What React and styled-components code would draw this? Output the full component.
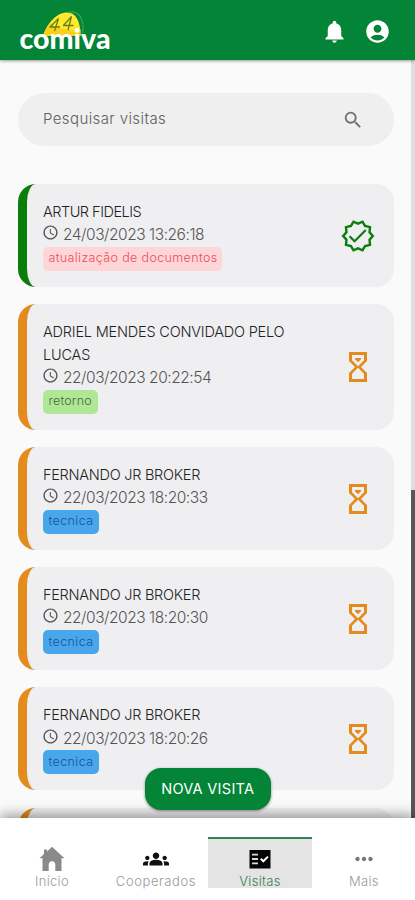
import React from "react"
import styled, { createGlobalStyle } from "styled-components"
import {
  MdNotifications,
  MdAccountCircle,
  MdSearch,
  MdAccessTime,
  MdGroups,
  MdMoreHoriz,
} from "react-icons/md"

const GlobalStyle = createGlobalStyle`
  * {
    box-sizing: border-box;
  }
  body {
    margin: 0;
    background: #fafafa;
    font-family: Inter, "Open Sans", sans-serif;
  }
`

const Page = styled.div`
  display: flex;
  flex-direction: column;
  position: relative;
  width: 415px;
  height: 900px;
  overflow: hidden;
`

const Header = styled.header`
  flex: none;
  display: flex;
  justify-content: space-between;
  align-items: flex-start;
  height: 60px;
  padding: 4px 24.5px 0 18px;
  background: #038437;
  box-shadow: 0 1px 3px rgba(0, 0, 0, 0.4);
  z-index: 1;
`

const HeaderActions = styled.div`
  display: flex;
  gap: 15.5px;
  padding-top: 14px;
  color: #fff;
  font-size: 27px;
`

const Body = styled.div`
  flex: 1;
  min-height: 0;
  display: flex;
`

const Content = styled.main`
  flex: 1;
  min-width: 0;
  overflow: hidden;
  padding: 32.5px 17px 0 18px;
`

const ScrollTrack = styled.div`
  flex: none;
  width: 4px;
  padding-top: 430px;
  background: #dedede;
`

const ScrollThumb = styled.div`
  height: 100%;
  background: #575757;
`

const SearchBox = styled.div`
  display: flex;
  justify-content: space-between;
  align-items: center;
  height: 53.5px;
  margin-bottom: 37.8px;
  padding: 0 30px 0 25px;
  border-radius: 27px;
  background: #efefef;
  color: #606060;

  svg {
    font-size: 22px;
    margin-top: 1px;
    color: #707070;
  }
`

const Text = styled.span`
  letter-spacing: ${p => p.$spacing || 0}px;
`

const SearchText = styled(Text)`
  margin-top: -2px;
  font-size: 15px;
  font-weight: 300;
`

const List = styled.div`
  display: flex;
  flex-direction: column;
  gap: 17.3px;
`

const Card = styled.article`
  flex: none;
  display: flex;
  justify-content: space-between;
  align-items: center;
  padding: 17px 18px 16px 16px;
  border-left: 9px solid ${p => p.$color};
  border-radius: 18px;
  background: #efeff1;
`

const CardInfo = styled.div`
  width: 252px;
`

const Name = styled.div`
  font-size: 14.5px;
  font-weight: 300;
  line-height: 22.5px;
  color: #222;
`

const DateRow = styled.div`
  display: flex;
  align-items: center;
  gap: 4px;
  height: 22.5px;
  font-size: 15.5px;
  font-weight: 300;
  white-space: nowrap;
  color: #555;

  svg {
    flex: none;
    font-size: 17px;
    margin: -4px 0 0 -1px;
  }
`

const Tag = styled.div`
  display: flex;
  align-items: center;
  width: ${p => p.$width}px;
  height: 24px;
  margin-top: 1px;
  padding: 0 0 2px 5.5px;
  border-radius: 5px;
  font-size: 12.5px;
  font-weight: 300;
  white-space: nowrap;
  background: ${p => p.$bg};
  color: ${p => p.$color};
`

const StatusIcon = styled.div`
  display: flex;
  font-size: 36px;
  color: ${p => p.$color};
`

const NewVisit = styled.button`
  position: absolute;
  left: 144.5px;
  top: 767.5px;
  width: 126.5px;
  height: 42px;
  padding: 0;
  border: 0;
  border-radius: 16px;
  background: #038437;
  box-shadow: 0 1px 3px rgba(0, 0, 0, 0.45);
  color: #fff;
  font-family: inherit;
  font-size: 14.5px;
  font-weight: 400;
  z-index: 2;
`

const Nav = styled.nav`
  flex: none;
  display: grid;
  grid-template-columns: repeat(4, 104px);
  height: 82px;
  padding-top: 19px;
  background: #fff;
  box-shadow: 0 -3px 12px rgba(0, 0, 0, 0.4);
  z-index: 1;
`

const NavItem = styled.a`
  display: flex;
  flex-direction: column;
  align-items: center;
  height: 51px;
  padding-top: 7px;
  border-top: 2.5px solid ${p => (p.$active ? "#37804f" : "transparent")};
  background: ${p => (p.$active ? "#e4e4e4" : "transparent")};
  color: ${p => (p.$active ? "#37804f" : "#999")};
  font-size: 13px;
  font-weight: 300;
  line-height: 16px;

  svg {
    flex: none;
    display: block;
    margin-bottom: 1px;
    font-size: 26px;
    color: ${p => p.$iconColor};
  }
`

const Logo = () => (
  <svg width="98" height="56" viewBox="18 4 98 56">
    <path d="M69 12C78 10.5 85 18 82.5 33" fill="none" stroke="#3fa257" strokeWidth="1.2" />
    <path d="M43 36C47 23 57 12.5 67 12.5C76 12.5 80.5 21 80.5 36Z" fill="#ffe92e" />
    <path d="M43 36C45 30 47 26 50 23C58 29 69 31 80.5 29V36Z" fill="#fad01f" />
    <g fill="none" stroke="#65800f" strokeWidth="1.3">
      <path d="M50 27L58.5 18.5L54.5 31M49.5 27H60" />
      <path d="M63.5 25.5L71.5 16.5L68 30M63 25.5H73.5" />
    </g>
    <text
      x="19.5"
      y="49.2"
      textLength="91"
      lengthAdjust="spacingAndGlyphs"
      fontFamily="Lato"
      fontWeight="900"
      fontSize="29"
      fill="#fff"
    >
      comiva
    </text>
  </svg>
)

const Verified = () => (
  <svg width="1em" height="1em" viewBox="0 0 24 24" fill="none" stroke="currentColor">
    <path
      strokeWidth="1.6"
      d="M21.9 12L19.7 9.5L20 6.1L16.7 5.3L15 2.5L12 3.8L9 2.5L7.3 5.3L4 6.1L4.3 9.5L2.1 12L4.3 14.5L4 17.9L7.3 18.7L9 21.5L12 20.2L15 21.5L16.7 18.7L20 17.9L19.7 14.5Z"
    />
    <path strokeWidth="1.5" d="M6.4 12.2L9.7 15.5L17.2 8" />
  </svg>
)

const Hourglass = () => (
  <svg width="1em" height="1em" viewBox="0 0 24 24" fill="currentColor">
    <path d="M6 2h12v6l-4 4 4 4v6H6v-6l4-4-4-4V2m10 14.5l-4-4-4 4V20h8v-3.5m-4-5l4-4V4H8v3.5l4 4M10 6h4v.75l-2 2-2-2V6z" />
  </svg>
)

const Home = () => (
  <svg width="26" height="26" viewBox="0 0 26 26" fill="currentColor">
    <path d="M13 .8L25.5 12.2H22.5V25H16.3V18.5C16.3 16.5 15 15.2 13 15.2S9.7 16.5 9.7 18.5V25H3.5V12.2H.5L5 8.1V3.6H8V5.4Z" />
  </svg>
)

const Checklist = () => (
  <svg width="26" height="26" viewBox="0 0 26 26">
    <path d="M2.5 4H23.5V22.5H2.5Z" fill="currentColor" />
    <path d="M5 8.6H11M5 13H11M5 17.4H11" fill="none" stroke="#ddd" strokeWidth="1.9" />
    <path d="M13.8 12.8L16.3 15.3L21 10.6" fill="none" stroke="#fff" strokeWidth="2" />
  </svg>
)

const tags = {
  docs: { label: "atualização de documentos", bg: "#ffd6d8", color: "#ee4b58", width: 179, spacing: 0.37 },
  retorno: { label: "retorno", bg: "#b0e796", color: "#3c6d35", width: 54.5, spacing: 0.2 },
  tecnica: { label: "tecnica", bg: "#49a6ea", color: "#14539a", width: 55.5, spacing: 0.4 },
}

const visits = [
  { name: "ARTUR FIDELIS", date: "24/03/2023 13:26:18", tag: "docs", spacing: -0.5, done: true },
  { name: "ADRIEL MENDES CONVIDADO PELO LUCAS", date: "22/03/2023 20:22:54", tag: "retorno", spacing: -0.2 },
  { name: "FERNANDO JR BROKER", date: "22/03/2023 18:20:33", tag: "tecnica", spacing: -0.27 },
  { name: "FERNANDO JR BROKER", date: "22/03/2023 18:20:30", tag: "tecnica", spacing: -0.27 },
  { name: "FERNANDO JR BROKER", date: "22/03/2023 18:20:26", tag: "tecnica", spacing: -0.27 },
]

const VisitCard = ({ name, date, tag, spacing, done }) => {
  const color = done ? "#0b7d0b" : "#e38b1d"
  const { label, bg, color: tagColor, width, spacing: tagSpacing } = tags[tag]
  return (
    <Card $color={color}>
      <CardInfo>
        <Name>
          <Text $spacing={spacing}>{name}</Text>
        </Name>
        <DateRow>
          <MdAccessTime />
          <Text $spacing={-0.46}>{date}</Text>
        </DateRow>
        <Tag $bg={bg} $color={tagColor} $width={width}>
          <Text $spacing={tagSpacing}>{label}</Text>
        </Tag>
      </CardInfo>
      <StatusIcon $color={color}>{done ? <Verified /> : <Hourglass />}</StatusIcon>
    </Card>
  )
}

// top edge of the next visit, cut off by the nav
const NextCard = styled(Card)`
  height: 103px;
`

export default () => (
  <Page>
    <GlobalStyle />
    <Header>
      <Logo />
      <HeaderActions>
        <MdNotifications />
        <MdAccountCircle />
      </HeaderActions>
    </Header>
    <Body>
      <Content>
        <SearchBox>
          <SearchText $spacing={0.4}>Pesquisar visitas</SearchText>
          <MdSearch />
        </SearchBox>
        <List>
          {visits.map(v => (
            <VisitCard key={v.date} {...v} />
          ))}
          <NextCard $color="#e38b1d" />
        </List>
      </Content>
      <ScrollTrack>
        <ScrollThumb />
      </ScrollTrack>
    </Body>
    <NewVisit>
      <Text $spacing={0.3}>NOVA VISITA</Text>
    </NewVisit>
    <Nav>
      <NavItem $iconColor="#8a8a8a">
        <Home />
        <Text $spacing={0.3}>Início</Text>
      </NavItem>
      <NavItem $iconColor="#111">
        <MdGroups />
        <Text $spacing={0.6}>Cooperados</Text>
      </NavItem>
      <NavItem $active $iconColor="#050505">
        <Checklist />
        <Text $spacing={0.3}>Visitas</Text>
      </NavItem>
      <NavItem $iconColor="#777">
        <MdMoreHoriz />
        <Text $spacing={0.3}>Mais</Text>
      </NavItem>
    </Nav>
  </Page>
)
